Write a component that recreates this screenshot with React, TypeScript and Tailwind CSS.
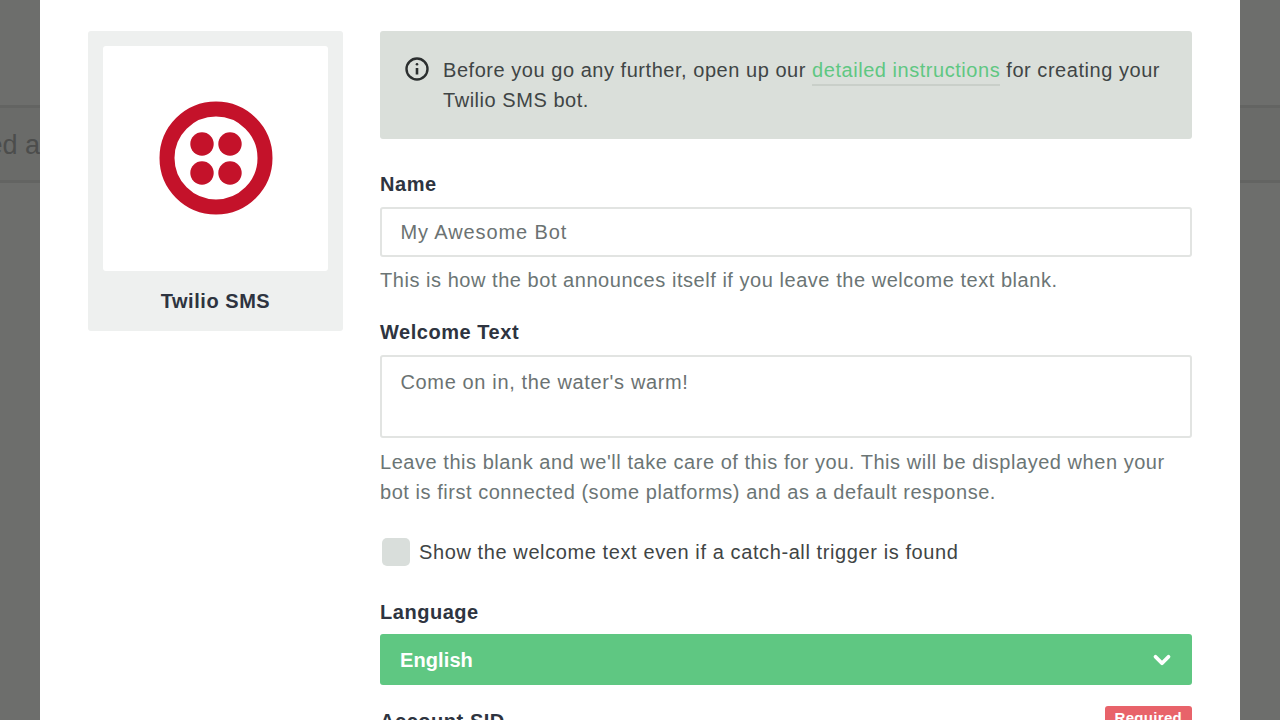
import { ChevronDown } from "lucide-react"

const font = "font-['Liberation_Sans',Arial,sans-serif]"

function Backdrop({ text }: { text?: string }) {
    return (
        <div className="w-10 shrink-0 overflow-hidden pt-[105px]">
            <div className="flex h-[78px] items-center justify-end border-y-[3px] border-[#636462] bg-[#6a6b69] pt-[2px]">
                {text && <span className="whitespace-nowrap text-[27px] tracking-normal text-[#4c4d4c]">{text}</span>}
            </div>
        </div>
    )
}

export default function App() {
    return (
        <div className={`${font} flex h-[720px] w-[1280px] overflow-hidden bg-[#6d6e6c] text-[20px] leading-[30px] tracking-[0.54px]`}>
            <Backdrop text="ed a" />

            <div className="flex w-[1200px] shrink-0 items-start gap-[37px] bg-white pl-12 pr-12 pt-[31px]">
                <div className="flex h-[300px] w-[255px] shrink-0 flex-col items-center rounded-[3px] bg-[#eef0ef] p-[15px]">
                    <div className="flex h-[225px] w-[225px] items-center justify-center rounded-[3px] bg-white">
                        <svg width="114" height="114" viewBox="0 0 114 114" className="mt-[-1px]">
                            <circle cx="57" cy="57" r="49" fill="none" stroke="#c4122a" strokeWidth="15" />
                            <circle cx="43" cy="43" r="11.7" fill="#c4122a" />
                            <circle cx="71" cy="43" r="11.7" fill="#c4122a" />
                            <circle cx="43" cy="72" r="11.7" fill="#c4122a" />
                            <circle cx="71" cy="72" r="11.7" fill="#c4122a" />
                        </svg>
                    </div>
                    <div className="mt-[15px] font-bold text-[#2e3440]">Twilio SMS</div>
                </div>

                <div className="w-[812px] shrink-0">
                    <div className="flex h-[108px] items-start rounded-[3px] bg-[#dadfda] pl-[24px] pt-[24px] text-[#3f4545]">
                        <svg width="26" height="26" viewBox="0 0 26 26" className="mr-[13px] mt-[1px] shrink-0" fill="none" stroke="#2b2f2f">
                            <circle cx="13" cy="13" r="10.5" strokeWidth="2.4" />
                            <path d="M13 12v6.5" strokeWidth="2.6" />
                            <circle cx="13" cy="8.2" r="1.3" fill="#2b2f2f" stroke="none" />
                        </svg>
                        <p className="w-[740px]">
                            Before you go any further, open up our{" "}
                            <a className="border-b-2 border-[#c9cfc9] pb-[3px] text-[#5fc782]">detailed instructions</a> for creating your Twilio SMS bot.
                        </p>
                    </div>

                    <label className="mt-[30px] block font-bold text-[#2e3440]">Name</label>
                    <div className="mt-2 flex h-[50px] items-center rounded-[3px] border-[2.5px] border-[#e2e4e2] pl-[18.5px] tracking-[0.9px] text-[#6b7272]">
                        My Awesome Bot
                    </div>
                    <p className="mt-2 text-[#6b7575]">This is how the bot announces itself if you leave the welcome text blank.</p>

                    <label className="mt-[22px] block font-bold text-[#2e3440]">Welcome Text</label>
                    <div className="mt-2 h-[83px] rounded-[3px] border-[2.5px] border-[#e2e4e2] pl-[18.5px] pt-[9.5px] tracking-[0.64px] text-[#6b7272]">
                        Come on in, the water's warm!
                    </div>
                    <p className="mt-[9px] text-[#6b7575]">
                        Leave this blank and we'll take care of this for you. This will be displayed when your bot is first connected (some platforms) and as a default response.
                    </p>

                    <div className="mt-[30px] flex items-center pl-[2px]">
                        <span className="h-[28px] w-[28px] rounded-[5px] bg-[#d9dedb]" />
                        <span className="ml-[9px] tracking-[0.6px] text-[#3f4545]">Show the welcome text even if a catch-all trigger is found</span>
                    </div>

                    <label className="mt-[30px] block font-bold text-[#2e3440]">Language</label>
                    <div className="mt-[7px] flex h-[51px] items-center justify-between rounded-[3px] bg-[#5fc782] pl-5 pr-[17px] font-bold tracking-[0.1px] text-white">
                        English
                        <ChevronDown size={26} strokeWidth={3.5} />
                    </div>

                    <div className="mt-[21px] flex items-start justify-between">
                        <label className="font-bold text-[#2e3440]">Account SID</label>
                        <span className="rounded-[3px] bg-[#e8636a] px-[10px] text-[15px] font-bold leading-[24px] tracking-[0.3px] text-white">Required</span>
                    </div>
                </div>
            </div>

            <Backdrop />
        </div>
    )
}
